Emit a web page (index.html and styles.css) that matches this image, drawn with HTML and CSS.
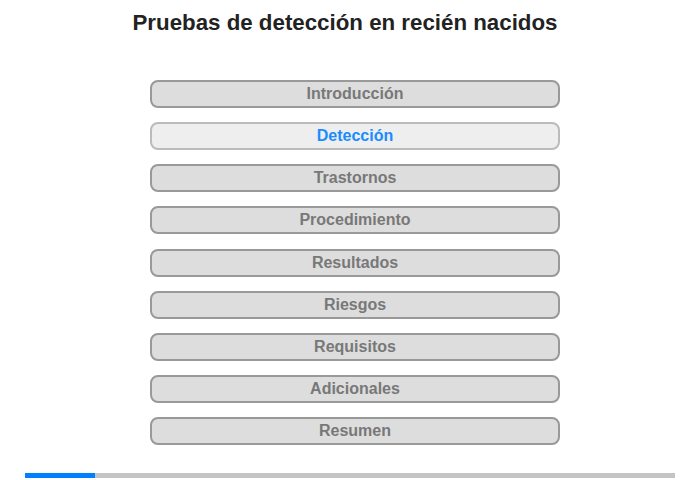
FILE: index.html
```html
<!DOCTYPE html>
<html lang="es">
<head>
<meta charset="utf-8">
<link rel="stylesheet" href="styles.css">
</head>
<body>
<div class="page">
  <h1 class="title">Pruebas de detección en recién nacidos</h1>
  <nav class="menu">
    <div class="item">Introducción</div>
    <div class="item active">Detección</div>
    <div class="item">Trastornos</div>
    <div class="item">Procedimiento</div>
    <div class="item">Resultados</div>
    <div class="item">Riesgos</div>
    <div class="item">Requisitos</div>
    <div class="item">Adicionales</div>
    <div class="item">Resumen</div>
  </nav>
  <div class="progress"><div class="progress-fill" style="width:70px"></div></div>
</div>
</body>
</html>
```

FILE: styles.css
```css
html, body {
  margin: 0;
  padding: 0;
  background: #fff;
}
.page {
  width: 700px;
  height: 480px;
  font-family: "Liberation Sans", Arial, sans-serif;
  display: flex;
  flex-direction: column;
}
.title {
  margin: 9px 0 0 0;
  width: 690px;
  text-align: center;
  font-size: 22.3px;
  line-height: 28px;
  font-weight: bold;
  color: #222;
}
.menu {
  margin: 43px 0 0 150px;
  width: 410px;
  display: flex;
  flex-direction: column;
  gap: 14.125px;
}
.item {
  box-sizing: border-box;
  height: 28px;
  border: 2px solid #999;
  border-radius: 8px;
  background: #ddd;
  color: #787878;
  font-size: 16px;
  font-weight: bold;
  line-height: 23px;
  text-align: center;
}
.item.active {
  background: #eee;
  border-color: #bbb;
  color: #1a8cff;
}
.progress {
  margin: 28px 0 0 25px;
  width: 650px;
  height: 5px;
  background: #c4c4c4;
}
.progress-fill {
  height: 5px;
  background: #0080ff;
}
```
